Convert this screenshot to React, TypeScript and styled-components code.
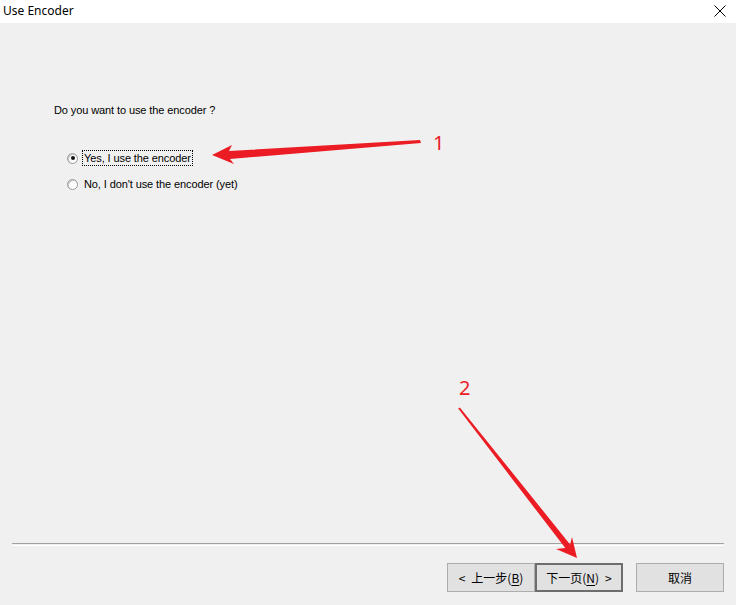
import styled, { createGlobalStyle } from "styled-components";

const GlobalStyle = createGlobalStyle`
  html, body {
    margin: 0;
    padding: 0;
    background: #f0f0f0;
  }
`;

const Window = styled.div`
  position: relative;
  width: 736px;
  height: 605px;
  display: flex;
  flex-direction: column;
  background: #f0f0f0;
  font-family: "Liberation Sans", Arial, sans-serif;
  color: #000;
  overflow: hidden;
`;

const TitleBar = styled.div`
  height: 23px;
  flex: none;
  display: flex;
  align-items: center;
  justify-content: space-between;
  background: #fff;
  padding: 0 10px 0 3px;
`;

const Title = styled.span`
  font-family: "Noto Sans", "Liberation Sans", sans-serif;
  font-size: 12px;
  line-height: 23px;
  margin-top: -3px;
`;

const CloseIcon = styled.svg`
  width: 12px;
  height: 12px;
  margin-top: -2px;
`;

const Body = styled.div`
  flex: 1;
  display: flex;
  flex-direction: column;
  padding: 80px 0 0 54px;
`;

const Question = styled.div`
  font-size: 11px;
  line-height: 14px;
  letter-spacing: -0.1px;
`;

const RadioGroup = styled.div`
  display: flex;
  flex-direction: column;
  gap: 12px;
  margin: 34px 0 0 13px;
`;

const RadioRow = styled.label`
  display: flex;
  align-items: center;
  height: 14px;
  gap: 5px;
`;

const RadioDot = styled.span<{ $checked?: boolean }>`
  position: relative;
  width: 11px;
  height: 11px;
  box-sizing: border-box;
  border-radius: 50%;
  border: 1px solid #9a9a9a;
  background: radial-gradient(circle at 60% 60%, #ffffff 40%, #e4e4e4 100%);
  box-shadow: inset 1px 1px 0 #c8c8c8;
  &::after {
    content: "";
    display: ${(p) => (p.$checked ? "block" : "none")};
    position: absolute;
    left: 2.5px;
    top: 2.5px;
    width: 4px;
    height: 4px;
    border-radius: 50%;
    background: #111;
  }
`;

const RadioLabel = styled.span<{ $focused?: boolean }>`
  font-size: 11px;
  line-height: 14px;
  letter-spacing: -0.1px;
  padding: 0 1px;
  outline: ${(p) => (p.$focused ? "1px dotted #000" : "none")};
  outline-offset: 0;
`;

const Footer = styled.div`
  flex: none;
  display: flex;
  flex-direction: column;
  padding-bottom: 13px;
`;

const Separator = styled.div`
  margin: 0 12px;
  height: 1px;
  border-top: 1px solid #a0a0a0;
  border-bottom: 1px solid #ffffff;
`;

const ButtonRow = styled.div`
  display: flex;
  justify-content: flex-end;
  padding: 17px 12px 0 0;
`;

const Button = styled.button<{ $default?: boolean; $gap?: number }>`
  width: 88px;
  height: 29px;
  box-sizing: border-box;
  margin-left: ${(p) => p.$gap ?? 0}px;
  background: #e1e1e1;
  border: ${(p) => (p.$default ? "2px solid #6d6d6d" : "1px solid #adadad")};
  font-family: "Noto Sans CJK SC", "Noto Sans", sans-serif;
  font-size: 12px;
  color: #000;
  padding: 0;
  display: flex;
  align-items: center;
  justify-content: center;
  gap: 6px;
  u {
    text-decoration: underline;
    text-underline-offset: 2px;
  }
`;

const Overlay = styled.svg`
  position: absolute;
  left: 0;
  top: 0;
  width: 736px;
  height: 605px;
  pointer-events: none;
`;

const Marker = styled.text`
  font-family: "Noto Sans", "Liberation Sans", sans-serif;
  font-size: 20px;
  fill: #ec1c24;
`;

export default function App() {
  return (
    <>
      <GlobalStyle />
      <Window>
        <TitleBar>
          <Title>Use Encoder</Title>
          <CloseIcon viewBox="0 0 12 12">
            <path d="M0.5 0.5 L11.5 11.5 M11.5 0.5 L0.5 11.5" stroke="#000" strokeWidth="1" fill="none" />
          </CloseIcon>
        </TitleBar>
        <Body>
          <Question>Do you want to use the encoder ?</Question>
          <RadioGroup>
            <RadioRow>
              <RadioDot $checked />
              <RadioLabel $focused>Yes, I use the encoder</RadioLabel>
            </RadioRow>
            <RadioRow>
              <RadioDot />
              <RadioLabel>No, I don't use the encoder (yet)</RadioLabel>
            </RadioRow>
          </RadioGroup>
        </Body>
        <Footer>
          <Separator />
          <ButtonRow>
            <Button>
              <span>&lt;</span>
              <span>
                上一步(<u>B</u>)
              </span>
            </Button>
            <Button $default>
              <span>
                下一页(<u>N</u>)
              </span>
              <span>&gt;</span>
            </Button>
            <Button $gap={13}>取消</Button>
          </ButtonRow>
        </Footer>
        <Overlay viewBox="0 0 736 605">
          <polygon
            points="212,155 232,145 229,151 420,140 421,143 230,159 234,164"
            fill="#ec1c24"
          />
          <polygon
            points="577,558 556,549 565.3,548.1 458.2,408.6 459.8,407.4 570.1,544.4 572,537"
            fill="#ec1c24"
          />
          <Marker x="433" y="150">1</Marker>
          <Marker x="459" y="395">2</Marker>
        </Overlay>
      </Window>
    </>
  );
}
